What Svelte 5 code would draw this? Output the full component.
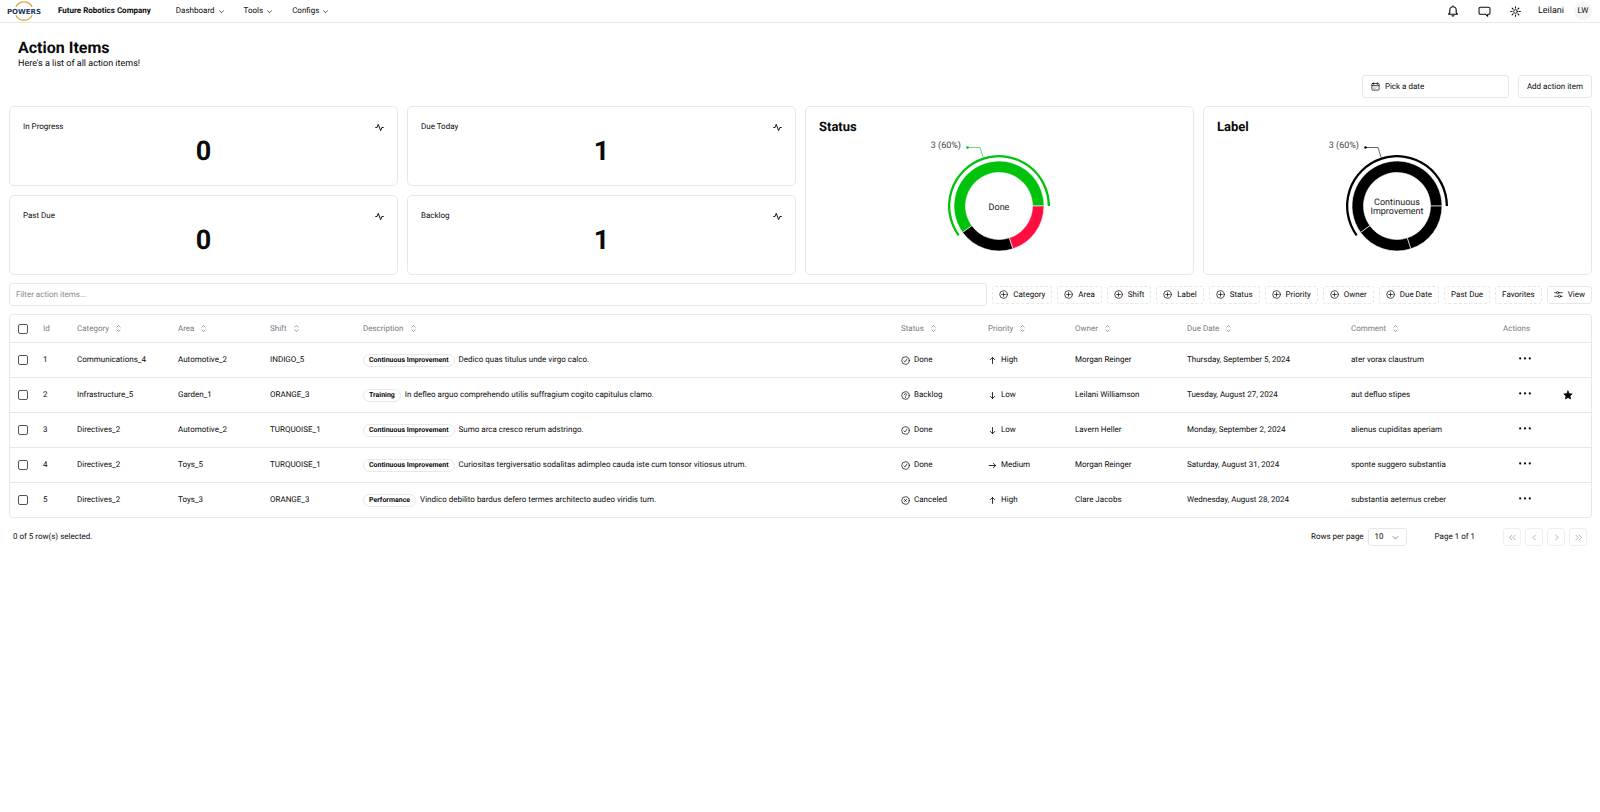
<script>
  const menus = ['Dashboard', 'Tools', 'Configs'];
  const stats = [
    { name: 'In Progress', value: 0 },
    { name: 'Due Today', value: 1 },
    { name: 'Past Due', value: 0 },
    { name: 'Backlog', value: 1 },
  ];
  const filters = ['Category', 'Area', 'Shift', 'Label', 'Status', 'Priority', 'Owner', 'Due Date'];
  const columns = ['Category', 'Area', 'Shift', 'Description', 'Status', 'Priority', 'Owner', 'Due Date', 'Comment'];
  const charts = [
    { title: 'Status', lines: ['Done'], colors: ['#00c20a', '#000', '#ff0f41'] },
    { title: 'Label', lines: ['Continuous', 'Improvement'], colors: ['#000', '#000', '#000'] },
  ];
  const rows = [
    { id: 1, category: 'Communications_4', area: 'Automotive_2', shift: 'INDIGO_5', label: 'Continuous Improvement', text: 'Dedico quas titulus unde virgo calco.', status: 'Done', priority: 'High', owner: 'Morgan Reinger', due: 'Thursday, September 5, 2024', comment: 'ater vorax claustrum', fav: false },
    { id: 2, category: 'Infrastructure_5', area: 'Garden_1', shift: 'ORANGE_3', label: 'Training', text: 'In defleo arguo comprehendo utilis suffragium cogito capitulus clamo.', status: 'Backlog', priority: 'Low', owner: 'Leilani Williamson', due: 'Tuesday, August 27, 2024', comment: 'aut defluo stipes', fav: true },
    { id: 3, category: 'Directives_2', area: 'Automotive_2', shift: 'TURQUOISE_1', label: 'Continuous Improvement', text: 'Sumo arca cresco rerum adstringo.', status: 'Done', priority: 'Low', owner: 'Lavern Heller', due: 'Monday, September 2, 2024', comment: 'alienus cupiditas aperiam', fav: false },
    { id: 4, category: 'Directives_2', area: 'Toys_5', shift: 'TURQUOISE_1', label: 'Continuous Improvement', text: 'Curiositas tergiversatio sodalitas adimpleo cauda iste cum tonsor vitiosus utrum.', status: 'Done', priority: 'Medium', owner: 'Morgan Reinger', due: 'Saturday, August 31, 2024', comment: 'sponte suggero substantia', fav: false },
    { id: 5, category: 'Directives_2', area: 'Toys_3', shift: 'ORANGE_3', label: 'Performance', text: 'Vindico debilito bardus defero termes architecto audeo viridis tum.', status: 'Canceled', priority: 'High', owner: 'Clare Jacobs', due: 'Wednesday, August 28, 2024', comment: 'substantia aeternus creber', fav: false },
  ];

  function point(r, deg) {
    const a = (deg * Math.PI) / 180;
    return `${(90 + r * Math.cos(a)).toFixed(2)} ${(70 - r * Math.sin(a)).toFixed(2)}`;
  }
  function sector(r1, r2, from, to) {
    const large = to - from > 180 ? 1 : 0;
    return `M${point(r2, from)}A${r2} ${r2} 0 ${large} 0 ${point(r2, to)}L${point(r1, to)}A${r1} ${r1} 0 ${large} 1 ${point(r1, from)}Z`;
  }
  const slices = [[0, 216], [216, 288], [288, 360]];
</script>

{#snippet icon(name, size = 9)}
  <svg class="icon" width={size} height={size} viewBox="0 0 15 15" fill="none" stroke="currentColor" stroke-width="1.2" stroke-linecap="round" stroke-linejoin="round" aria-hidden="true">
    {#if name === 'chevron'}<path d="M3.5 6l4 4 4-4" stroke-width="1.5" />
    {:else if name === 'plus'}<circle cx="7.5" cy="7.5" r="6.3" /><path d="M7.5 4.5v6M4.5 7.5h6" />
    {:else if name === 'sort'}<path d="M4.8 5.2l2.7-2.7 2.7 2.7M4.8 9.8l2.7 2.7 2.7-2.7" />
    {:else if name === 'Done'}<circle cx="7.5" cy="7.5" r="6.3" /><path d="M5.2 8.3l1.5 1.6 3.2-4.7" />
    {:else if name === 'Backlog'}<circle cx="7.5" cy="7.5" r="6.3" /><path d="M5.6 6c0-2.3 3.8-2.3 3.8 0 0 1.4-1.9 1.4-1.9 2.8M7.5 10.7v.2" />
    {:else if name === 'Canceled'}<circle cx="7.5" cy="7.5" r="6.3" /><path d="M6 6l3 3M9 6l-3 3" stroke-width="1.6" />
    {:else if name === 'High'}<path d="M7.5 12.5V2.5M3.8 6l3.7-3.7L11.2 6" stroke-width="1.4" />
    {:else if name === 'Low'}<path d="M7.5 2.5v10M3.8 9l3.7 3.7L11.2 9" stroke-width="1.4" />
    {:else if name === 'Medium'}<path d="M2 7.5h10.5M9 3.8l3.7 3.7L9 11.2" stroke-width="1.4" />
    {:else if name === 'left'}<path d="M9 3.5l-4 4 4 4" />
    {:else if name === 'right'}<path d="M6 3.5l4 4-4 4" />
    {:else if name === 'first'}<path d="M6.5 3.5l-4 4 4 4M12 3.5l-4 4 4 4" />
    {:else if name === 'last'}<path d="M8.5 3.5l4 4-4 4M3 3.5l4 4-4 4" />
    {:else if name === 'view'}<path d="M1 4.5h3M8.2 4.5h5.8M1 10.5h6M11.2 10.5h2.8" /><circle cx="6.1" cy="4.5" r="1.9" /><circle cx="9.1" cy="10.5" r="1.9" />
    {:else if name === 'calendar'}<rect x="1.5" y="2.5" width="12" height="11" rx="1" /><path d="M4.5 1v3M10.5 1v3M1.5 6h12" /><path d="M4.5 8.5h6M4.5 11h4" stroke-dasharray="0.4 1.8" stroke-width=".5" />
    {:else if name === 'activity'}<path d="M1.2 7.5H3.4L5.4 2.2 9.4 12.8 11.4 7.5H13.8" stroke-width="1.6" />
    {:else if name === 'bell'}<path d="M7.5 1v1M2 11.5h11L11.5 9.5V6.2a4 4 0 0 0-8 0v3.3zM6.3 13.3c.5.7 1.9.7 2.4 0" stroke-width="1.4" />
    {:else if name === 'chat'}<path d="M2.5 2.5h10a1.3 1.3 0 0 1 1.3 1.3v5.6a1.3 1.3 0 0 1-1.3 1.3h-1.3v2.4L8.7 10.7H2.5A1.3 1.3 0 0 1 1.2 9.4V3.8A1.3 1.3 0 0 1 2.5 2.5z" />
    {:else if name === 'sun'}<circle cx="7.5" cy="7.5" r="2.5" /><path d="M7.5 1v1.8M7.5 12.2V14M1 7.5h1.8M12.2 7.5H14M2.9 2.9l1.3 1.3M10.8 10.8l1.3 1.3M2.9 12.1l1.3-1.3M10.8 4.2l1.3-1.3" stroke-width="1.5" />
    {:else if name === 'star'}<path d="M7.5 1.5l1.8 4.1 4.5.4-3.4 3 1 4.4-3.9-2.3-3.9 2.3 1-4.4-3.4-3 4.5-.4z" fill="currentColor" />
    {:else if name === 'dots'}<g fill="currentColor" stroke="none"><circle cx="1.5" cy="5.5" r="1.4" /><circle cx="7.5" cy="5.5" r="1.4" /><circle cx="13.5" cy="5.5" r="1.4" /></g>
    {/if}
  </svg>
{/snippet}

<header>
  <a class="logo" href="#home" aria-label="Powers">
    <svg width="36" height="20" viewBox="0 0 36 20">
      <path d="M9.8 6a9.2 9.2 0 0 1 16.4 0M9.8 14.200a9.200 9.200 0 0 0 16.400 0" fill="none" stroke="#d9a648" stroke-width="1.300" />
      <text x="18" y="13" text-anchor="middle" class="word">POWERS</text>
    </svg>
  </a>
  <strong>Future Robotics Company</strong>
  <nav>
    {#each menus as m}<button class="plain">{m}{@render icon('chevron', 7)}</button>{/each}
  </nav>
  <div class="tools">
    <button class="plain" aria-label="Notifications">{@render icon('bell', 12)}</button>
    <button class="plain" aria-label="Messages">{@render icon('chat', 13)}</button>
    <button class="plain" aria-label="Theme">{@render icon('sun', 11)}</button>
  </div>
  <div class="account">
    <span class="user">Leilani</span>
    <span class="avatar">LW</span>
  </div>
</header>

<main>
  <div class="heading">
    <h1>Action Items</h1>
    <p>Here's a list of all action items!</p>
  </div>
  <div class="actions">
    <button class="box date">{@render icon('calendar')}Pick a date</button>
    <button class="box">Add action item</button>
  </div>

  <section class="summary">
    <div class="stats">
      {#each stats as s}
        <article class="card stat">
          <div class="stat-head"><h3>{s.name}</h3>{@render icon('activity')}</div>
          <div class="value">{s.value}</div>
        </article>
      {/each}
    </div>
    {#each charts as c}
      <article class="card chart">
        <h2>{c.title}</h2>
        <svg width="180" height="126" viewBox="1 0 180 126">
          {#each slices as [from, to], i}
            <path d={sector(33.5, 45, from, to)} fill={c.colors[i]} stroke="#fff" stroke-width="0.6" />
          {/each}
          <path d={sector(48.7, 51, 0, 216)} fill={c.colors[0]} />
          <path d="M74.2 21.5L71 11.5H58.5" fill="none" stroke={c.colors[0]} stroke-width="0.6" />
          <circle cx="58.5" cy="11.5" r="1.3" fill={c.colors[0]} />
          <text class="pct" x="52" y="12" text-anchor="end">3 (60%)</text>
          {#each c.lines as line, i}
            <text x="90" y={c.lines.length > 1 ? 69 + i * 9 : 74} text-anchor="middle">{line}</text>
          {/each}
        </svg>
      </article>
    {/each}
  </section>

  <div class="toolbar">
    <input class="filter" type="text" placeholder="Filter action items..." aria-label="Filter action items" />
    {#each filters as f}<button class="pill">{@render icon('plus')}{f}</button>{/each}
    <button class="pill">Past Due</button>
    <button class="pill">Favorites</button>
    <button class="pill solid">{@render icon('view')}View</button>
  </div>

  <div class="frame">
    <table>
      <colgroup>
        <col class="c-check" /><col class="c-id" /><col class="c-cat" /><col class="c-area" /><col class="c-shift" /><col />
        <col class="c-status" /><col class="c-status" /><col class="c-owner" /><col class="c-due" /><col class="c-comment" /><col class="c-act" /><col class="c-star" />
      </colgroup>
      <thead>
        <tr>
          <th class="check"><input type="checkbox" aria-label="Select all" /></th>
          <th>Id</th>
          {#each columns as c}<th><button class="plain sort">{c}{@render icon('sort')}</button></th>{/each}
          <th>Actions</th>
          <th></th>
        </tr>
      </thead>
      <tbody>
        {#each rows as r}
          <tr>
            <td class="check"><input type="checkbox" aria-label={`Select row ${r.id}`} /></td>
            <td>{r.id}</td>
            <td>{r.category}</td>
            <td>{r.area}</td>
            <td>{r.shift}</td>
            <td><div class="desc"><span class="badge">{r.label}</span><span>{r.text}</span></div></td>
            <td><div class="with-icon">{@render icon(r.status)}{r.status}</div></td>
            <td><div class="with-icon">{@render icon(r.priority)}{r.priority}</div></td>
            <td>{r.owner}</td>
            <td>{r.due}</td>
            <td>{r.comment}</td>
            <td class="menu"><button class="plain" aria-label="Row actions">{@render icon('dots', 12)}</button></td>
            <td class="star">{#if r.fav}{@render icon('star', 10)}{/if}</td>
          </tr>
        {/each}
      </tbody>
    </table>
  </div>

  <footer>
    <span>0 of 5 row(s) selected.</span>
    <div class="pager">
      <label for="size">Rows per page</label>
      <span class="select"><select id="size"><option>10</option></select>{@render icon('chevron')}</span>
      <span class="page">Page 1 of 1</span>
      <button class="step" disabled aria-label="First page">{@render icon('first')}</button>
      <button class="step" disabled aria-label="Previous page">{@render icon('left')}</button>
      <button class="step" disabled aria-label="Next page">{@render icon('right')}</button>
      <button class="step" disabled aria-label="Last page">{@render icon('last')}</button>
    </div>
  </footer>
</main>

<style>
  :global(body) { background: #fff; color: #0a0a0a; font: 8px/12px Roboto, "Noto Sans", sans-serif; text-rendering: geometricPrecision; }
  button, input, select { font: inherit; color: inherit; margin: 0; box-sizing: border-box; text-rendering: inherit; }
  h1, h2, h3, p { margin: 0; }
  .icon { display: block; flex: none; }
  .plain { display: flex; align-items: center; gap: 3px; padding: 0; border: 0; background: none; }
  header { display: flex; align-items: center; height: 22px; border-bottom: 1px solid #e8e8ea; padding: 0 8px 0 6px; }
  .logo { display: flex; margin-right: 16px; }
  .word { font: 700 7px "DejaVu Sans", sans-serif; fill: #1c3a63; }
  nav { display: flex; gap: 19px; margin-left: 25px; }
  .tools { display: flex; align-items: center; margin-left: auto; gap: 19px; }
  .account { display: flex; align-items: center; gap: 10px; margin-left: 17px; }
  .user { font-size: 9px; }
  .avatar { width: 18px; height: 18px; border-radius: 50%; background: #f4f4f5; text-align: center; line-height: 18px; }
  main { padding: 15px 8px 0 9px; }
  .heading { padding: 0 9px; }
  h1 { font-size: 16px; line-height: 20px; font-weight: 700; }
  .heading p { font-size: 9px; line-height: 12px; }
  .actions { display: flex; justify-content: flex-end; gap: 9px; margin-top: 5px; }
  .box { display: flex; align-items: center; gap: 5px; height: 23px; padding: 0 8px; border: 1px solid #e8e8ea; border-radius: 3px; background: #fff; }
  .date { width: 147px; }
  .summary { display: grid; grid-template-columns: repeat(4, minmax(0, 1fr)); gap: 9px; margin-top: 8px; }
  .stats { grid-column: span 2; display: grid; grid-template-columns: 1fr 1fr; gap: 9px; }
  .card { border: 1px solid #e8e8ea; border-radius: 5px; }
  .stat { padding: 14px 13px 12px; height: 52px; }
  .stat-head { display: flex; justify-content: space-between; align-items: center; }
  h3 { font-size: 8px; font-weight: 400; }
  .value { font-size: 27px; line-height: 36px; font-weight: 700; text-align: center; }
  .chart { display: flex; flex-direction: column; padding: 13px 13px 0; }
  h2 { font-size: 13px; line-height: 16px; font-weight: 700; }
  .chart svg { align-self: center; font-size: 9px; fill: #18181b; }
  .pct { fill: #444; }
  .toolbar { display: flex; align-items: center; gap: 5px; margin-top: 8px; }
  .filter { flex: 1; min-width: 0; height: 23px; padding: 0 6px; border: 1px solid #e8e8ea; border-radius: 3px; outline: 0; }
  .filter::placeholder { color: #8a8a90; }
  .pill { display: flex; align-items: center; gap: 5px; height: 18px; padding: 0 6px; border: 1px dashed #e8e8ea; border-radius: 3px; background: #fff; white-space: nowrap; }
  .solid { border-style: solid; }
  .frame { margin-top: 8px; border: 1px solid #e8e8ea; border-radius: 4px; }
  table { width: 100%; table-layout: fixed; border-collapse: collapse; }
  th, td { padding: 0 5px; text-align: left; font-weight: 400; white-space: nowrap; }
  th { height: 27px; color: #7b7b83; }
  td { height: 34px; border-top: 1px solid #e8e8ea; }
  .sort { gap: 5px; }
  .c-check { width: 28px; } .c-id { width: 34px; } .c-cat { width: 101px; } .c-area { width: 92px; } .c-shift { width: 93px; }
  .c-status { width: 87px; } .c-owner { width: 112px; } .c-due { width: 164px; } .c-comment { width: 152px; } .c-act { width: 53px; } .c-star { width: 40px; }
  .check { padding-left: 8px; }
  input[type="checkbox"] { appearance: none; display: block; width: 10px; height: 10px; border: 1px solid #555; border-radius: 2px; }
  .desc, .with-icon { display: flex; align-items: center; gap: 4px; }
  .badge { font-size: 7px; line-height: 11px; font-weight: 700; border: 1px solid #e8e8ea; border-radius: 7px; padding: 0 5px; }
  .menu button { margin: 0 auto; }
  .star { padding: 0 12px; }
  footer { display: flex; justify-content: space-between; align-items: center; margin-top: 10px; padding: 0 5px 0 4px; }
  .pager { display: flex; align-items: center; gap: 4px; }
  .select { position: relative; display: flex; align-items: center; }
  select { appearance: none; width: 39px; height: 18px; padding: 0 6px; border: 1px solid #e8e8ea; border-radius: 3px; background: #fff; }
  .select .icon { position: absolute; right: 7px; color: #777; pointer-events: none; }
  .page { margin: 0 24px; }
  .step { display: flex; align-items: center; justify-content: center; width: 18px; height: 18px; padding: 0; border: 1px solid #efeff1; border-radius: 3px; background: #fff; color: #999; }
</style>
